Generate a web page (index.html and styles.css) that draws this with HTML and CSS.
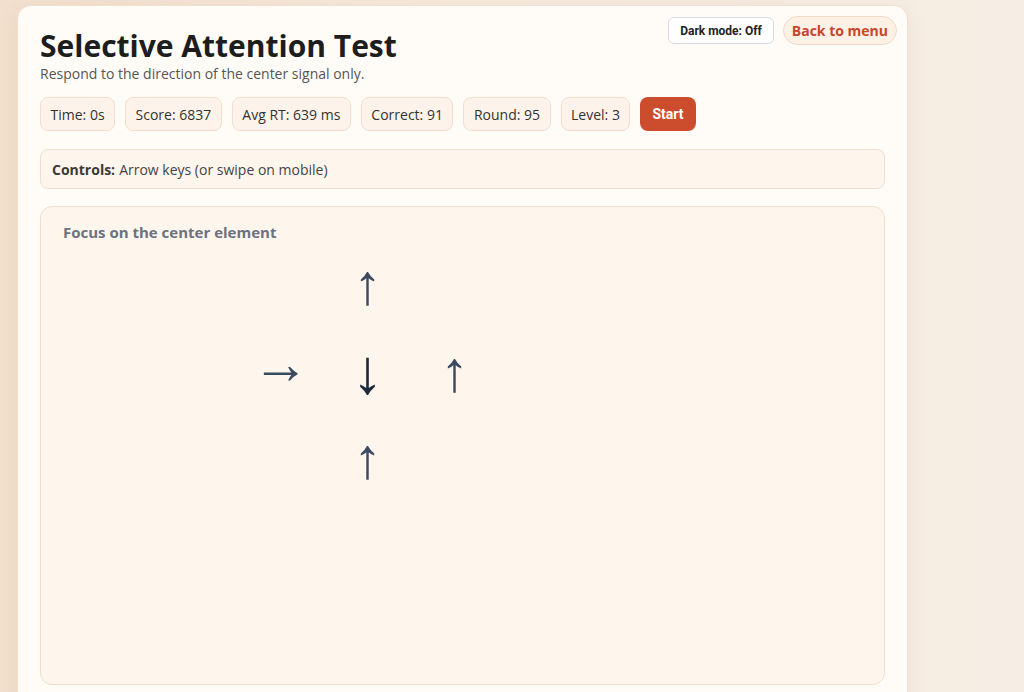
FILE: index.html
```html
<!DOCTYPE html>
<html lang="en">
<head>
<meta charset="utf-8">
<title>Selective Attention Test</title>
<link rel="stylesheet" href="styles.css">
</head>
<body>
<main class="card">
  <header class="header">
    <div class="title-block">
      <h1 class="title">Selective Attention Test</h1>
      <p class="subtitle">Respond to the direction of the center signal only.</p>
    </div>
    <div class="tools">
      <button class="btn-dark">Dark mode: Off</button>
      <button class="btn-back">Back to menu</button>
    </div>
  </header>

  <section class="stats">
    <div class="stat">Time: 0s</div>
    <div class="stat">Score: 6837</div>
    <div class="stat">Avg RT: 639 ms</div>
    <div class="stat">Correct: 91</div>
    <div class="stat">Round: 95</div>
    <div class="stat">Level: 3</div>
    <button class="btn-start">Start</button>
  </section>

  <div class="controls"><strong>Controls:</strong> Arrow keys (or swipe on mobile)</div>

  <section class="game">
    <h2 class="game-title">Focus on the center element</h2>
    <div class="stimulus">
      <span class="cell"></span>
      <span class="cell arrow">&#8593;</span>
      <span class="cell"></span>
      <span class="cell arrow horizontal">&#8594;</span>
      <span class="cell arrow center">&#8595;</span>
      <span class="cell arrow">&#8593;</span>
      <span class="cell"></span>
      <span class="cell arrow">&#8593;</span>
      <span class="cell"></span>
    </div>
  </section>
</main>
</body>
</html>
```

FILE: styles.css
```css
html, body {
  margin: 0;
  padding: 0;
  height: 100%;
}

body {
  background: linear-gradient(90deg, #f2dfcd 0%, #f5e9dd 40%, #f6eee4 100%);
  font-family: "Open Sans", "Noto Sans", sans-serif;
  color: #2b2b2b;
  overflow: hidden;
}

.card {
  margin: 5px 0 0 17px;
  width: 891px;
  height: 720px;
  box-sizing: border-box;
  padding: 0 22px 0 22px;
  background: #fffcf8;
  border: 1px solid #f1e0d0;
  border-radius: 14px;
  box-shadow: 0 4px 18px rgba(180, 130, 90, 0.12);
}

.header {
  display: flex;
  justify-content: space-between;
  align-items: flex-start;
  margin-right: -12px;
  padding-top: 10px;
}

.title-block {
  padding-top: 11px;
}

.title {
  margin: 0;
  font-size: 30px;
  line-height: 38px;
  font-weight: 700;
  color: #1d1d1d;
}

.subtitle {
  margin: 0;
  font-size: 14px;
  line-height: 17px;
  color: #555;
}

.tools {
  display: flex;
  align-items: center;
  gap: 9px;
}

.btn-dark {
  height: 27px;
  padding: 0 11px;
  background: #fff;
  border: 1px solid #d8dce2;
  border-radius: 6px;
  font-family: "Roboto", "Liberation Sans", sans-serif;
  font-size: 12px;
  font-weight: 700;
  color: #222;
}

.btn-back {
  height: 29px;
  padding: 0 8px;
  background: #fdf0e5;
  border: 1px solid #f3d9c6;
  border-radius: 999px;
  font-family: inherit;
  font-size: 14px;
  font-weight: 700;
  color: #c8462b;
}

.stats {
  display: flex;
  align-items: center;
  gap: 10px;
  margin-top: 15px;
}

.stat {
  height: 34px;
  box-sizing: border-box;
  padding: 0 9.5px;
  display: flex;
  align-items: center;
  background: #fdf3ea;
  border: 1px solid #f3dfcc;
  border-radius: 8px;
  font-size: 14px;
  color: #333;
}

.btn-start {
  height: 34px;
  padding: 0 12px;
  background: #cc4d2d;
  border: none;
  border-radius: 8px;
  font-family: "Roboto", "Liberation Sans", sans-serif;
  font-size: 14px;
  font-weight: 700;
  color: #fff;
}

.controls {
  margin-top: 18px;
  height: 40px;
  box-sizing: border-box;
  padding: 0 11px;
  display: flex;
  align-items: center;
  gap: 4px;
  background: #fef5ec;
  border: 1px solid #f2e0cf;
  border-radius: 8px;
  font-size: 14px;
  color: #444;
}

.controls strong {
  color: #3a3a3a;
}

.game {
  margin-top: 17px;
  height: 479px;
  box-sizing: border-box;
  padding: 15px 22px;
  background: #fef6ec;
  border: 1px solid #f1dfcc;
  border-radius: 12px;
}

.game-title {
  margin: 0;
  font-size: 15px;
  line-height: 20px;
  font-weight: 700;
  color: #6b7280;
}

.stimulus {
  margin: -1px 0 0 174px;
  display: grid;
  grid-template-columns: repeat(3, 87px);
  grid-auto-rows: 87px;
}

.cell {
  display: flex;
  align-items: center;
  justify-content: center;
}

.arrow {
  font-family: "Liberation Sans", sans-serif;
  font-size: 57px;
  line-height: 1;
  color: #3a4a60;
}

.arrow.horizontal {
  padding-bottom: 16px;
}

.arrow.center {
  font-size: 63px;
  color: #1e293b;
}
```
